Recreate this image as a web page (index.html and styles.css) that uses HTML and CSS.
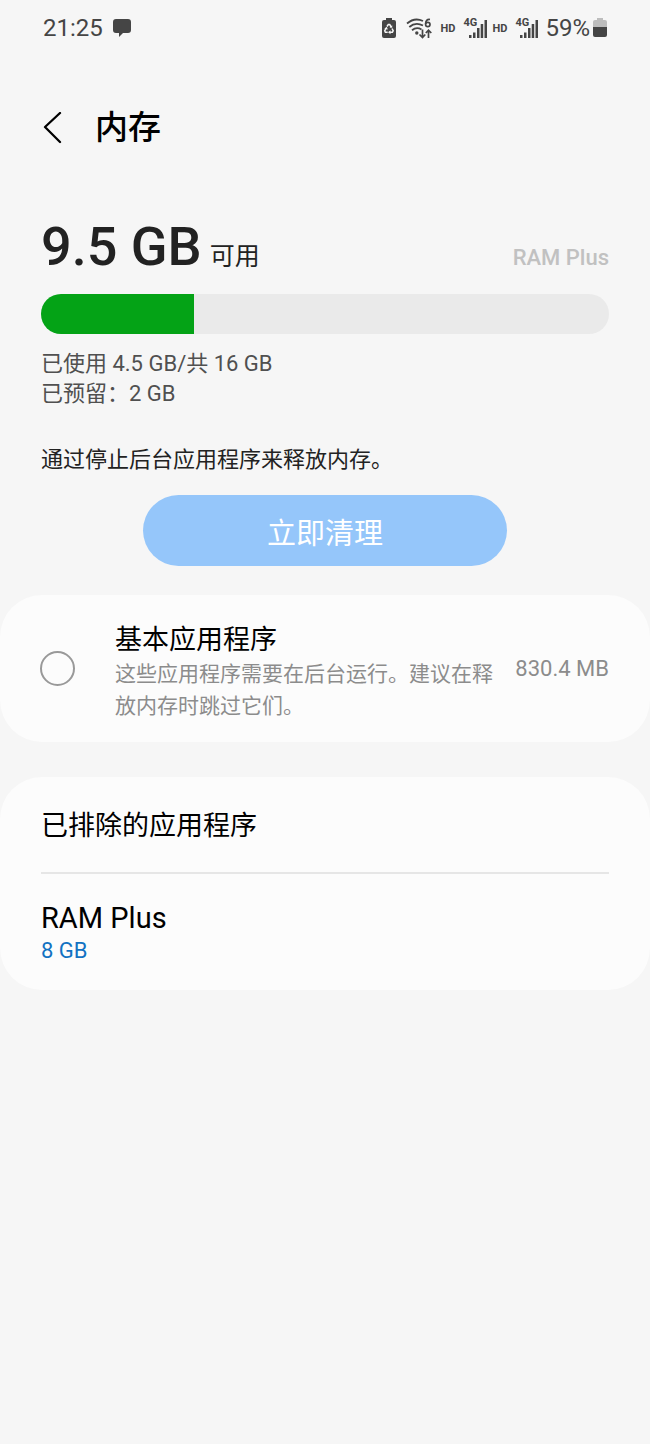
FILE: index.html
```html
<!DOCTYPE html>
<html lang="zh-CN">
<head>
<meta charset="utf-8">
<meta name="viewport" content="width=device-width, initial-scale=1">
<title>内存</title>
<link rel="stylesheet" href="styles.css">
</head>
<body>
<div class="status">
  <span class="clock">21:25</span>
  <svg class="chat" width="20" height="20" viewBox="0 0 20 20" aria-hidden="true"><path d="M4 1H16Q19 1 19 4V12Q19 15 16 15H11L7 19V15H4Q1 15 1 12V4Q1 1 4 1Z" fill="#454545"/></svg>
  <div class="indicators">
    <svg width="14" height="20" viewBox="0 0 14 20" aria-hidden="true">
      <path d="M4 0H10V2H12Q14 2 14 4V18Q14 20 12 20H2Q0 20 0 18V4Q0 2 2 2H4Z" fill="#454545"/>
      <g fill="none" stroke="#f6f6f6" stroke-width="1.5"><path d="M5 8.5L6.3 6.6H7.7L9.2 9"/><path d="M10 10.5L11.2 12.8L10.4 14.3H7.5"/><path d="M5.7 14.3H3.4L2.7 12.8L4.2 10.2"/></g>
      <path d="M7.5 9.5L10.2 9.8L10.2 7.2ZM8.5 12.2V16.2L6 14.3ZM2.3 10.8L5.8 11.6L4.8 8.8Z" fill="#f6f6f6"/>
    </svg>
    <svg class="wifi" width="27" height="21" viewBox="0 0 27 21" aria-hidden="true">
      <g fill="none" stroke="#454545" stroke-width="1.8"><path d="M1 5.5Q8.5 -1 17 3"/><path d="M3.3 9Q9.5 3.5 17 7.5"/><path d="M6 12.3Q10.5 8.5 15.5 11.5"/></g>
      <circle cx="10.8" cy="15" r="1.7" fill="#454545"/>
      <g fill="none" stroke="#454545" stroke-width="1.7"><path d="M16.5 11.5V19.5M13.5 16.5L16.5 19.5L19.3 16.5"/><path d="M22.5 20V12.5M19.8 15L22.5 12.2L25.3 15"/><path d="M24 1.5Q19.6 1 19.6 6"/><ellipse cx="21.8" cy="6.5" rx="2.2" ry="2.2"/></g>
    </svg>
    <span class="hd">HD</span>
    <span class="signal"><span class="net">4G</span><svg width="18" height="18" viewBox="0 0 18 18" aria-hidden="true"><path d="M0 15H2.5V18H0ZM4 12.5H6.5V18H4ZM8 8H10.5V18H8ZM11.7 4H14.2V18H11.7ZM15.5 0H18V18H15.5Z" fill="#454545"/></svg></span>
    <span class="hd">HD</span>
    <span class="signal"><span class="net">4G</span><svg width="18" height="18" viewBox="0 0 18 18" aria-hidden="true"><path d="M0 15H2.5V18H0ZM4 12.5H6.5V18H4ZM8 8H10.5V18H8ZM11.7 4H14.2V18H11.7ZM15.5 0H18V18H15.5Z" fill="#454545"/></svg></span>
    <span class="percent">59%</span>
    <svg width="14" height="20" viewBox="0 0 14 20" aria-hidden="true"><path d="M4 0H10V2H12Q14 2 14 4V9H0V4Q0 2 2 2H4Z" fill="#bdbdbd"/><path d="M0 9H14V17Q14 19 12 19H2Q0 19 0 17Z" fill="#454545"/></svg>
  </div>
</div>
<header class="header">
  <button class="back" type="button" aria-label="返回"><svg width="20" height="32" viewBox="0 0 20 32" aria-hidden="true"><path d="M18 1L3 15L18 30" fill="none" stroke="#000" stroke-width="2.3" stroke-linecap="round" stroke-linejoin="round"/></svg></button>
  <h1 class="title">内存</h1>
</header>
<main>
  <section class="summary">
    <div class="free">
      <p class="amount"><strong class="number">9.5 GB</strong><span class="unit">可用</span></p>
      <span class="plus">RAM Plus</span>
    </div>
    <div class="meter"><div class="used"></div></div>
    <p class="usage">已使用 4.5 GB/共 16 GB<br>已预留：2 GB</p>
    <p class="hint">通过停止后台应用程序来释放内存。</p>
    <button class="clean" type="button">立即清理</button>
  </section>
  <section class="card essential">
    <input class="check" type="checkbox" id="essential">
    <label class="info" for="essential"><span class="name">基本应用程序</span><span class="detail">这些应用程序需要在后台运行。建议在释放内存时跳过它们。</span></label>
    <span class="size">830.4 MB</span>
  </section>
  <section class="card">
    <a class="row" href="#excluded"><span class="name">已排除的应用程序</span></a>
    <a class="row ram" href="#ram-plus"><span class="ram-name">RAM Plus</span><span class="ram-value">8 GB</span></a>
  </section>
</main>
</body>
</html>
```
FILE: styles.css
```css
* { box-sizing: border-box; }
body {
  margin: 0;
  background: #f6f6f6;
  color: #000;
  font-family: Roboto, "Noto Sans CJK SC", sans-serif;
}
h1, p { margin: 0; }
button { border: 0; padding: 0; font: inherit; }
svg { display: block; flex: none; }

.status {
  display: flex;
  align-items: center;
  height: 56px;
  padding: 0 43px;
  color: #454545;
}
.clock { font-size: 24px; }
.chat { margin-left: 9px; }
.indicators { display: flex; align-items: center; margin-left: auto; }
.wifi { margin-left: 10px; }
.hd { margin: 0 8px; font-size: 11px; font-weight: 700; }
.signal { position: relative; padding: 2px 0 0 5px; }
.net {
  position: absolute;
  top: -1px;
  left: 0;
  font-size: 11px;
  line-height: 12px;
  font-weight: 700;
}
.signal + .hd { margin-left: 6px; }
.percent { margin: 0 3px 0 7px; font-size: 24px; }

.header {
  display: flex;
  align-items: center;
  gap: 33px;
  height: 144px;
  padding: 0 42px;
}
.back { background: none; color: inherit; }
.title { font-size: 33px; line-height: 48px; font-weight: 500; }

.summary { padding: 15px 41px 29px; }
.free { display: flex; justify-content: space-between; align-items: baseline; }
.amount { line-height: 64px; color: #222; }
.number { font-size: 54px; font-weight: 500; }
.unit { margin-left: 8px; font-size: 25px; }
.plus { font-size: 22px; font-weight: 500; color: #c1c1c1; }
.meter {
  height: 40px;
  margin-top: 2px;
  border-radius: 20px;
  background: #eaeaea;
  overflow: hidden;
}
.used { width: 27%; height: 100%; background: #04a316; }
.usage { margin-top: 15px; font-size: 22px; line-height: 30px; color: #505050; }
.hint { margin-top: 35px; font-size: 22px; line-height: 32px; color: #222; }
.clean {
  display: block;
  width: 64%;
  height: 71px;
  margin: 19px auto 0;
  border-radius: 36px;
  background: #95c6fa;
  color: #fff;
  font-size: 29px;
}

.card { border-radius: 42px; background: #fcfcfc; }
.essential {
  display: flex;
  align-items: center;
  margin-bottom: 35px;
  padding: 0 41px 0 40px;
}
.check {
  flex: none;
  appearance: none;
  width: 35px;
  height: 35px;
  margin: 0 40px 0 0;
  border: 2px solid #999;
  border-radius: 50%;
}
.check:checked { background: #0b76c5; }
.info { flex: 1; padding: 28px 0 20px; }
.name { display: block; font-size: 27px; line-height: 35px; }
.detail { display: block; font-size: 21px; line-height: 32px; color: #8c8c8c; }
.size { margin-left: 17px; font-size: 22px; color: #8c8c8c; white-space: nowrap; }
.row { display: block; margin: 0 41px; padding: 32px 0 28px; color: inherit; text-decoration: none; }
.ram { padding: 27px 0 23px; border-top: 2px solid #e6e6e6; }
.ram-name { display: block; font-size: 29px; line-height: 34px; }
.ram-value { display: block; font-size: 22px; line-height: 32px; color: #1272c2; }
```
